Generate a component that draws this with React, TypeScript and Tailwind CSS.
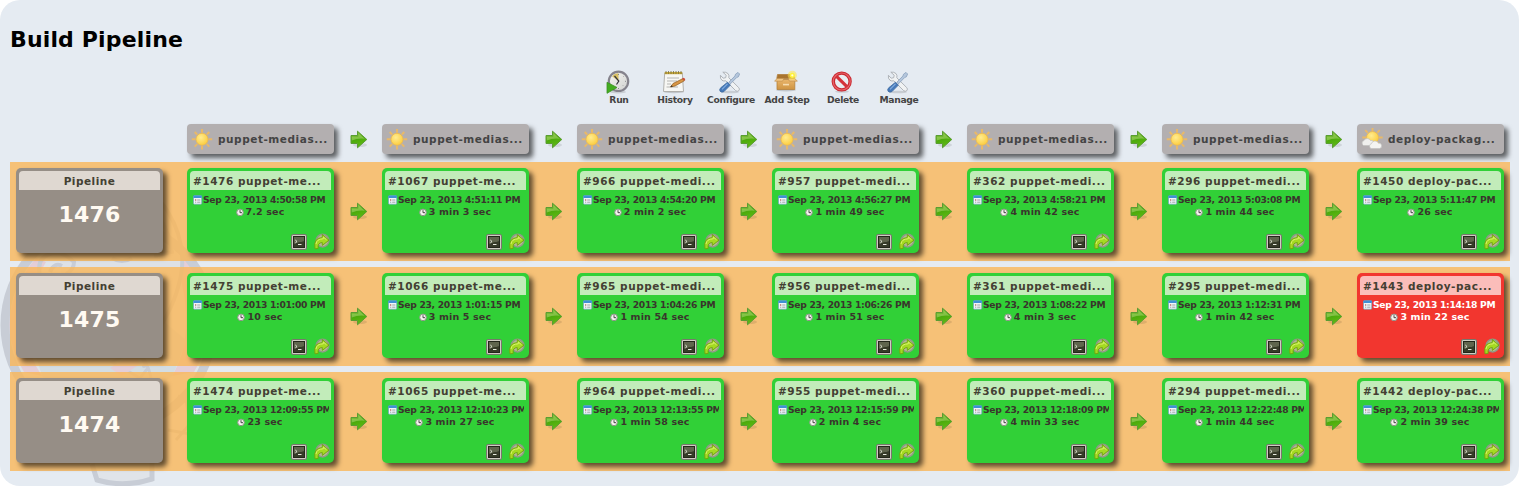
import React from "react";

type Build = { title: string; date: string; time: string; failed?: boolean };
type Run = { id: string; builds: Build[] };

const jobs = [
  "puppet-medias...",
  "puppet-medias...",
  "puppet-medias...",
  "puppet-medias...",
  "puppet-medias...",
  "puppet-medias...",
  "deploy-packag...",
];

const runs: Run[] = [
  {
    id: "1476",
    builds: [
      { title: "#1476 puppet-me...", date: "Sep 23, 2013 4:50:58 PM", time: "7.2 sec" },
      { title: "#1067 puppet-me...", date: "Sep 23, 2013 4:51:11 PM", time: "3 min 3 sec" },
      { title: "#966 puppet-medi...", date: "Sep 23, 2013 4:54:20 PM", time: "2 min 2 sec" },
      { title: "#957 puppet-medi...", date: "Sep 23, 2013 4:56:27 PM", time: "1 min 49 sec" },
      { title: "#362 puppet-medi...", date: "Sep 23, 2013 4:58:21 PM", time: "4 min 42 sec" },
      { title: "#296 puppet-medi...", date: "Sep 23, 2013 5:03:08 PM", time: "1 min 44 sec" },
      { title: "#1450 deploy-pac...", date: "Sep 23, 2013 5:11:47 PM", time: "26 sec" },
    ],
  },
  {
    id: "1475",
    builds: [
      { title: "#1475 puppet-me...", date: "Sep 23, 2013 1:01:00 PM", time: "10 sec" },
      { title: "#1066 puppet-me...", date: "Sep 23, 2013 1:01:15 PM", time: "3 min 5 sec" },
      { title: "#965 puppet-medi...", date: "Sep 23, 2013 1:04:26 PM", time: "1 min 54 sec" },
      { title: "#956 puppet-medi...", date: "Sep 23, 2013 1:06:26 PM", time: "1 min 51 sec" },
      { title: "#361 puppet-medi...", date: "Sep 23, 2013 1:08:22 PM", time: "4 min 3 sec" },
      { title: "#295 puppet-medi...", date: "Sep 23, 2013 1:12:31 PM", time: "1 min 42 sec" },
      { title: "#1443 deploy-pac...", date: "Sep 23, 2013 1:14:18 PM", time: "3 min 22 sec", failed: true },
    ],
  },
  {
    id: "1474",
    builds: [
      { title: "#1474 puppet-me...", date: "Sep 23, 2013 12:09:55 PM", time: "23 sec" },
      { title: "#1065 puppet-me...", date: "Sep 23, 2013 12:10:23 PM", time: "3 min 27 sec" },
      { title: "#964 puppet-medi...", date: "Sep 23, 2013 12:13:55 PM", time: "1 min 58 sec" },
      { title: "#955 puppet-medi...", date: "Sep 23, 2013 12:15:59 PM", time: "2 min 4 sec" },
      { title: "#360 puppet-medi...", date: "Sep 23, 2013 12:18:09 PM", time: "4 min 33 sec" },
      { title: "#294 puppet-medi...", date: "Sep 23, 2013 12:22:48 PM", time: "1 min 44 sec" },
      { title: "#1442 deploy-pac...", date: "Sep 23, 2013 12:24:38 PM", time: "2 min 39 sec" },
    ],
  },
];

function Gradients() {
  return (
    <svg width="0" height="0" className="absolute" aria-hidden="true">
      <defs>
        <linearGradient id="arrowFill" x1="0" y1="0" x2="0.3" y2="1">
          <stop offset="0" stopColor="#8cc63a" />
          <stop offset="0.5" stopColor="#4aa80c" />
          <stop offset="1" stopColor="#5fba12" />
        </linearGradient>
        <radialGradient id="sunFill" cx="0.4" cy="0.35" r="0.7">
          <stop offset="0" stopColor="#ffec90" />
          <stop offset="1" stopColor="#fccb3a" />
        </radialGradient>
        <linearGradient id="boxFill" x1="0" y1="0" x2="0" y2="1">
          <stop offset="0" stopColor="#e9b66c" />
          <stop offset="1" stopColor="#cf9443" />
        </linearGradient>
        <linearGradient id="dialFill" x1="0" y1="0" x2="1" y2="1">
          <stop offset="0" stopColor="#f8f8f4" />
          <stop offset="1" stopColor="#cfd0cf" />
        </linearGradient>
      </defs>
    </svg>
  );
}

function StepArrow() {
  return (
    <svg width="18" height="19" viewBox="0 0 18 19" className="ml-[2px]">
      <ellipse cx="10" cy="15" rx="7" ry="2" fill="#00000018" />
      <path d="M1 5.5H7.5V1.2L16.8 9.5L7.5 17.8V13.5H1V10Z" fill="url(#arrowFill)" stroke="#5a9c34" strokeWidth="1" strokeLinejoin="round" />
      <path d="M1.8 6.4H8.3V3L14.8 8.8Q8 8 1.8 10.5Z" fill="#c4e08a" opacity="0.45" />
    </svg>
  );
}

function SunIcon({ cloudy }: { cloudy?: boolean }) {
  return (
    <svg width="22" height="22" viewBox="0 0 22 22" className="shrink-0">
      <g transform={cloudy ? "translate(0.5 -1.5)" : "translate(0 0.3)"}>
        <path
          d="M11 0.8V4.5M11 17.5V21.2M0.8 11H4.5M17.5 11H21.2M3.7 3.7L6.2 6.2M15.8 15.8L18.3 18.3M18.3 3.7L15.8 6.2M6.2 15.8L3.7 18.3"
          stroke="#e9b968"
          strokeWidth="1.9"
        />
        <circle cx="11" cy="11" r="6" fill="url(#sunFill)" stroke="#efba4c" strokeWidth="0.8" />
      </g>
      {cloudy && (
        <g stroke="#c2c2c0" strokeWidth="0.7">
          <path d="M2.5 17.5A2.7 2.7 0 0 1 3 12.5A3.5 3 0 0 1 9.5 12.5A2.5 2.5 0 0 1 11 17.5Z" fill="#f0f0ee" />
          <path d="M10 20.5A2.6 2.6 0 0 1 10.5 15.6A3.6 3.4 0 0 1 17.4 15.2A2.7 2.7 0 0 1 18.5 20.5Z" fill="#f4f4f2" />
        </g>
      )}
    </svg>
  );
}

function CalendarIcon() {
  return (
    <svg width="10" height="10" viewBox="0 0 10 10" className="shrink-0">
      <rect x="0.5" y="0.8" width="8.2" height="8.4" rx="0.8" fill="#f2f6f8" stroke="#6fa4bd" strokeWidth="0.7" />
      <rect x="0.3" y="0.5" width="8.6" height="2.4" rx="0.6" fill="#3f90d4" />
      <path d="M2 5H3.3M4.2 5H7.4M2 7.2H3.3M4.2 7.2H7.4" stroke="#9aa4a8" strokeWidth="1" />
      <path d="M2 5H3.2" stroke="#c4574a" strokeWidth="1" />
    </svg>
  );
}

function ClockIcon() {
  return (
    <svg width="8" height="9" viewBox="0 0 8 9" className="shrink-0">
      <circle cx="4" cy="4.4" r="3.3" fill="#f4f4ee" stroke="#8f9189" strokeWidth="1" />
      <path d="M4 2.2V4.7H6" fill="none" stroke="#333" strokeWidth="0.9" />
    </svg>
  );
}

function TerminalIcon() {
  return (
    <svg width="16" height="16" viewBox="0 0 16 16">
      <rect x="0.5" y="0.5" width="15" height="15" rx="1.5" fill="#cfcdc2" stroke="#77776c" />
      <rect x="2" y="2" width="12" height="12" fill="#23271a" />
      <path d="M3 3H13V7.5Q8 8 3 10Z" fill="#5f654d" />
      <path d="M3 10Q8 8 13 7.5V13H3Z" fill="#363b28" />
      <path d="M4.3 6L6 7.5L4.3 9M7 10.5H10.5" fill="none" stroke="#e6e9dc" strokeWidth="1" />
    </svg>
  );
}

function RerunIcon() {
  return (
    <svg width="16" height="17" viewBox="0 0 16 17">
      <circle cx="8.6" cy="7.6" r="6.3" fill="#b3bb93" stroke="#8f9a85" strokeWidth="1.5" />
      <path
        d="M1 15.8Q-1 5 8.3 4.6V1.6L15 7.2L8.3 12.4V9.5Q3.2 9.8 4.2 15.4Z"
        fill="#a4da22"
        stroke="#6fa30d"
        strokeWidth="0.9"
        strokeLinejoin="round"
      />
      <path d="M2 11Q2.5 6 9.3 5.8V4L12.5 6.8" fill="none" stroke="#d9f36c" strokeWidth="1" />
    </svg>
  );
}

function RunIcon() {
  return (
    <svg width="24" height="24" viewBox="0 0 24 24">
      <ellipse cx="12" cy="22" rx="8" ry="1.5" fill="#00000020" />
      <circle cx="12.5" cy="11.3" r="9.7" fill="url(#dialFill)" stroke="#85838d" strokeWidth="2.2" />
      <path d="M12.5 11V3.2A8 8 0 0 0 6 6.2Z" fill="#d8bf63" />
      <path d="M12.5 4V5M19 11.3H20M12.5 18V19M17.5 6.5L17 7M17.5 16L17 15.5" stroke="#88888c" strokeWidth="1" />
      <path d="M8.5 6L12.8 11L10.5 14.5" fill="none" stroke="#34343c" strokeWidth="1.2" />
      <path d="M1 12.3L11 17.5L1 23.3Z" fill="#43ad20" stroke="#3a8f22" strokeWidth="0.8" />
    </svg>
  );
}

function HistoryIcon() {
  return (
    <svg width="24" height="24" viewBox="0 0 24 24">
      <ellipse cx="12" cy="22" rx="10" ry="1.2" fill="#00000028" />
      <path d="M2.7 3H20.3L21.5 21.5H1.5Z" fill="#f7f7f4" stroke="#aaa9a5" strokeWidth="0.9" />
      <path d="M2.7 2H20.3V4.2H2.7Z" fill="#c7a738" />
      <path d="M4 1V4M6.5 1V4M9 1V4M11.5 1V4M14 1V4M16.5 1V4M19 1V4" stroke="#7a7040" strokeWidth="0.8" />
      <path d="M5 8H17M5 11H15M5 14H9M4.5 17H16" stroke="#b5b5b3" strokeWidth="1" />
      <path d="M8.5 17L11 13.5L20.5 8.8L22.3 10.8L13 16Z" fill="#d99645" stroke="#8d5a1c" strokeWidth="0.7" />
      <path d="M20 8.6L21.7 7.8Q23.6 8.4 23.2 10.2L22.1 10.8Z" fill="#cf4b3a" />
      <path d="M8.5 17L9.7 15.2L10.8 16.6Z" fill="#222" />
    </svg>
  );
}

function ToolsIcon() {
  return (
    <svg width="24" height="24" viewBox="0 0 24 24">
      <ellipse cx="12" cy="22" rx="9" ry="1.3" fill="#00000020" />
      <path
        d="M4.8 2.2L8.2 5.2L7.7 7.7L5.2 8.2L2.4 5.3Q1.8 8.6 4 10.3Q5.6 11.4 7.8 10.8L17.6 20.6Q19.2 22 20.8 20.7Q22.2 19 20.7 17.6L10.8 7.8Q11.5 5.3 10 3.6Q7.9 1.6 4.8 2.2Z"
        fill="#f0f2f3"
        stroke="#a9aeb3"
        strokeWidth="0.9"
      />
      <path d="M20 2.4L21.6 4L20.4 6.8L18.6 7.6L12.5 13.8L10.9 12.2L16.9 6L17.5 4.2Z" fill="#b4c6dc" stroke="#8199b8" strokeWidth="0.7" />
      <path d="M9.5 12.2L12.4 15.1L6 21.6Q3.7 22.9 2 21.2Q1 19.4 2.7 17.8Z" fill="#4679b9" stroke="#3a659b" strokeWidth="0.7" />
      <path d="M9.5 13.8L4 19.4" stroke="#86afe0" strokeWidth="1.1" />
    </svg>
  );
}

function BoxIcon() {
  return (
    <svg width="24" height="24" viewBox="0 0 24 24">
      <ellipse cx="12" cy="20" rx="10" ry="1.4" fill="#00000028" />
      <path d="M3.5 4.5H19.5L20.5 8.5H2.8Z" fill="#a9742f" stroke="#b07d3c" strokeWidth="0.8" />
      <path d="M3 9.5H20.8V19.5H3Z" fill="url(#boxFill)" stroke="#b5813b" strokeWidth="0.8" />
      <path d="M3 8.5L0.6 11.2H8.5L10 8.5Z" fill="#efc483" stroke="#bd8a45" strokeWidth="0.6" />
      <path d="M20.8 8.5L23.4 11.2H15.5L14 8.5Z" fill="#efc483" stroke="#bd8a45" strokeWidth="0.6" />
      <path d="M9 13.8H15V15.4H9Z" fill="#f6dcb0" />
      <circle cx="18.3" cy="5.3" r="4.6" fill="#ffe84a" opacity="0.55" />
      <circle cx="18.3" cy="5.3" r="2.6" fill="#fff23d" />
      <circle cx="18.3" cy="5.3" r="1.1" fill="#fffde0" />
    </svg>
  );
}

function DeleteIcon() {
  return (
    <svg width="24" height="24" viewBox="0 0 24 24">
      <ellipse cx="12" cy="21.6" rx="7" ry="1.2" fill="#00000020" />
      <circle cx="11.7" cy="11.5" r="8.4" fill="#e9edf1" stroke="#c92a31" strokeWidth="3.4" />
      <path d="M5.8 5.6L17.4 17.2" stroke="#d4323a" strokeWidth="3.2" />
      <circle cx="11.7" cy="11.5" r="8.5" fill="none" stroke="#e8636a" strokeWidth="1.2" />
    </svg>
  );
}

const tools = [
  { label: "Run", Icon: RunIcon },
  { label: "History", Icon: HistoryIcon },
  { label: "Configure", Icon: ToolsIcon },
  { label: "Add Step", Icon: BoxIcon },
  { label: "Delete", Icon: DeleteIcon },
  { label: "Manage", Icon: ToolsIcon },
];

function ButlerMark() {
  return (
    <svg width="225" height="306" viewBox="0 180 225 306" className="absolute bottom-0 left-0" fill="none">
      <circle cx="109" cy="325" r="104" fill="#dfe4ea" />
      <path d="M9 325Q12 285 36 258L46 262Q26 295 26 330Q28 356 42 376L24 372Q10 350 9 325Z" fill="#e3ced8" />
      <path d="M209 325Q206 285 184 252L177 266Q188 300 186 330Q184 356 172 376L194 372Q208 350 209 325Z" fill="#e3ced8" />
      <path d="M28 330L62 300L150 310L186 340Q180 360 172 376Q108 430 42 376Z" fill="#d3dde3" />
      <path d="M60 262Q66 192 124 186Q176 196 184 262Q182 300 160 326L66 320Z" fill="#dde1e6" />
      <circle cx="109" cy="325" r="104" stroke="#c8cdd6" strokeWidth="9" />
      <path d="M96 190Q150 180 168 212Q184 238 182 268Q178 300 158 330" stroke="#c8cdd6" strokeWidth="4" />
      <path
        d="M40 276Q36 258 50 254Q62 250 74 262Q74 270 66 274M50 272Q54 262 62 266M112 258Q122 264 132 258M160 218Q170 234 172 252L154 256"
        stroke="#c8cdd6"
        strokeWidth="4"
      />
      <path d="M112 362L136 350L148 368L140 378ZM132 350Q146 352 152 382" stroke="#c8cdd6" strokeWidth="3" />
      <path d="M110 368L136 352L140 364L122 376Z" fill="#e3ced8" />
      <path d="M178 396L186 399L190 424L176 440M168 430L190 434" stroke="#c8cdd6" strokeWidth="3" />
      <path d="M92 464L97 480Q124 488 152 479L152 458" fill="#e0e4e9" stroke="#c8cdd6" strokeWidth="5" />
      <circle cx="144" cy="366" r="2" fill="#c8cdd6" />
    </svg>
  );
}

function BuildCard({ build }: { build: Build }) {
  const tone = build.failed ? "bg-[#f2362f] text-white" : "bg-[#31d037] text-[#39352c]";
  const bar = build.failed ? "bg-[#fbbdba]" : "bg-[#c2ecba]";
  return (
    <div className={`flex h-[85px] w-[147px] shrink-0 flex-col rounded-[5px] p-[3px] shadow-[4px_4px_5px_rgba(0,0,0,0.6)] ${tone}`}>
      <div className={`h-[19px] shrink-0 overflow-hidden rounded-t-[4px] pl-[3px] text-[10.5px] leading-[20px] tracking-[0.55px] whitespace-nowrap text-[#444033] ${bar}`}>
        {build.title}
      </div>
      <div className="mt-1 mr-[2px] ml-[3px] flex h-3 items-center overflow-hidden text-[9.2px] leading-3 tracking-[-0.3px] whitespace-nowrap">
        <CalendarIcon />
        <span>{build.date}</span>
      </div>
      <div className="flex h-3 items-center justify-center gap-[2px] pr-[1px] text-[9.5px] leading-3 tracking-[0.15px] whitespace-nowrap">
        <ClockIcon />
        <span>{build.time}</span>
      </div>
      <div className="mt-auto mr-[1px] flex items-center justify-end gap-[7px]">
        <TerminalIcon />
        <RerunIcon />
      </div>
    </div>
  );
}

function Gap() {
  return (
    <div className="flex w-12 shrink-0 items-center justify-center">
      <StepArrow />
    </div>
  );
}

export default function App() {
  return (
    <div className="relative h-[486px] w-[1519px] overflow-hidden rounded-[20px] bg-[#e5ebf2] px-[10px] pt-7 font-['DejaVu_Sans',sans-serif] font-bold">
      <Gradients />
      <ButlerMark />
      <div className="relative flex flex-col">
        <h1 className="h-[24px] text-[22px] leading-[24px] tracking-[0.15px] text-black">Build Pipeline</h1>
        <nav className="mt-[18px] ml-[581px] flex h-[36px]">
          {tools.map(({ label, Icon }) => (
            <div key={label} className="flex w-14 flex-col items-center">
              <div className="mr-[3px]">
                <Icon />
              </div>
              <span className="text-[9.2px] leading-3 tracking-[-0.3px] whitespace-nowrap text-[#444]">{label}</span>
            </div>
          ))}
        </nav>
        <div className="mt-[18px] ml-[177px] flex h-[30px]">
          {jobs.map((job, i) => (
            <React.Fragment key={i}>
              {i > 0 && <Gap />}
              <div className="flex h-[30px] w-[147px] shrink-0 items-center gap-[5px] rounded-[4px] bg-[#b3afb0] pl-1 text-[10.5px] tracking-[0.55px] whitespace-nowrap text-[#444] shadow-[4px_4px_5px_rgba(0,0,0,0.6)]">
                <SunIcon cloudy={i === jobs.length - 1} />
                <span className="leading-[28px]">{job}</span>
              </div>
            </React.Fragment>
          ))}
        </div>
        <div className="mt-2 flex flex-col gap-[6px]">
          {runs.map((run) => (
            <div key={run.id} className="flex h-[99px] w-[1500px] bg-[#fab758]/80 pt-[6px] pl-[6px]">
              <div className="mr-6 h-[85px] w-[147px] shrink-0 rounded-[5px] bg-[#968e86] p-[3px] text-center shadow-[4px_4px_5px_rgba(0,0,0,0.6)]">
                <div className="h-[19px] rounded-t-[4px] bg-[#dfd8d1] text-[10.5px] leading-[20px] tracking-[0.5px] text-[#444033]">Pipeline</div>
                <div className="mt-[13px] text-[22px] leading-[24px] tracking-[0.2px] text-[#fffaf2]">{run.id}</div>
              </div>
              {run.builds.map((build, i) => (
                <React.Fragment key={build.title}>
                  {i > 0 && (
                    <div className="flex h-[87px] shrink-0">
                      <Gap />
                    </div>
                  )}
                  <BuildCard build={build} />
                </React.Fragment>
              ))}
            </div>
          ))}
        </div>
      </div>
    </div>
  );
}
